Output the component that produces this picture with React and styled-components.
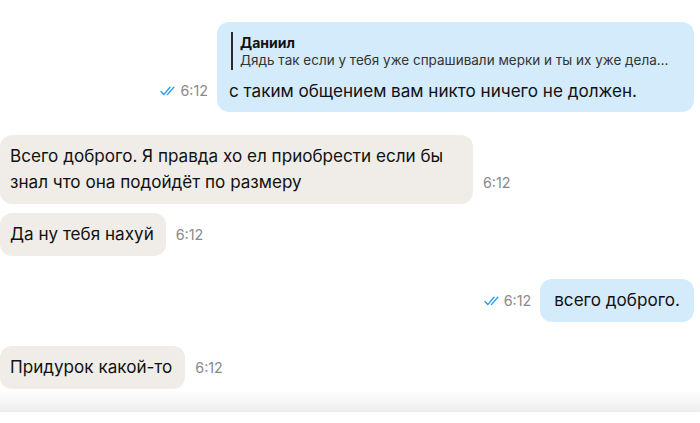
import React from "react";
import styled, { createGlobalStyle } from "styled-components";

const Global = createGlobalStyle`
  html, body { margin: 0; padding: 0; background: #ffffff; }
  body { font-family: Inter, "Noto Sans", sans-serif; color: #111111; overflow: hidden; }
`;

const Page = styled.div`
  width: 700px;
  height: 423px;
  display: flex;
  flex-direction: column;
  overflow: hidden;
`;

const Messages = styled.div`
  flex: 1;
  display: flex;
  flex-direction: column;
  padding: 22px 6px 0 0;
  overflow: hidden;
`;

const Row = styled.div`
  display: flex;
  align-items: flex-end;
  justify-content: ${(p) => (p.$out ? "flex-end" : "flex-start")};
  gap: ${(p) => (p.$out ? "9px" : "10px")};
  margin-top: ${(p) => p.$mt || 0}px;
`;

const Bubble = styled.div`
  background: ${(p) => (p.$out ? "#d4ebfc" : "#f0ede8")};
  border-radius: 12px;
  padding: ${(p) => p.$pad || "8px 12px 9px 10px"};
  max-width: ${(p) => p.$max || 477}px;
  width: ${(p) => (p.$w ? `${p.$w}px` : "auto")};
  min-width: 0;
  box-sizing: border-box;
  font-size: 17.1px;
  line-height: 26px;
`;

const Quote = styled.div`
  border-left: 2px solid #2b2b2b;
  padding: 2px 0 1px 7px;
  margin: 0 0 8px 2px;
  min-width: 0;
`;

const QuoteName = styled.div`
  font-size: 14px;
  font-weight: 700;
  line-height: 18px;
`;

const QuoteText = styled.div`
  font-size: 13.5px;
  line-height: 17px;
  color: #333333;
  white-space: nowrap;
  overflow: hidden;
  text-overflow: ellipsis;
`;

const Meta = styled.div`
  display: flex;
  align-items: center;
  gap: 4px;
  margin-bottom: 12px;
  flex-shrink: 0;
`;

const Time = styled.span`
  font-size: 14.3px;
  line-height: 18px;
  color: #8a8a8a;
`;

const Shade = styled.div`
  height: 22px;
  flex-shrink: 0;
  background: linear-gradient(to bottom, #ffffff, #ededed);
`;

const Footer = styled.div`
  height: 11px;
  flex-shrink: 0;
  background: #ffffff;
`;

const Checks = () => (
  <svg width="16" height="10" viewBox="0 0 16 10" fill="none">
    <path d="M1 5.6 L3.8 8.6 L10 1.2" stroke="#2a9bf0" strokeWidth="1.4" strokeLinecap="round" strokeLinejoin="round" />
    <path d="M7.4 8.6 L13.8 1.2" stroke="#2a9bf0" strokeWidth="1.4" strokeLinecap="round" strokeLinejoin="round" />
  </svg>
);

const OutMeta = () => (
  <Meta>
    <Checks />
    <Time>6:12</Time>
  </Meta>
);

const InMeta = () => (
  <Meta>
    <Time>6:12</Time>
  </Meta>
);

export default function App() {
  return (
    <Page>
      <Global />
      <Messages>
        <Row $out>
          <OutMeta />
          <Bubble $out $pad="10px 12px 8px 12px" $max={477} $w={477}>
            <Quote>
              <QuoteName>Даниил</QuoteName>
              <QuoteText>Дядь так если у тебя уже спрашивали мерки и ты их уже дела…</QuoteText>
            </Quote>
            с таким общением вам никто ничего не должен.
          </Bubble>
        </Row>
        <Row $mt={23}>
          <Bubble $max={473}>
            Всего доброго. Я правда хо ел приобрести если бы знал что она подойдёт по размеру
          </Bubble>
          <InMeta />
        </Row>
        <Row $mt={9}>
          <Bubble>Да ну тебя нахуй</Bubble>
          <InMeta />
        </Row>
        <Row $out $mt={23}>
          <OutMeta />
          <Bubble $out $pad="8px 14px 9px 14px">всего доброго.</Bubble>
        </Row>
        <Row $mt={24}>
          <Bubble $pad="8px 13px 9px 10px">Придурок какой-то</Bubble>
          <InMeta />
        </Row>
      </Messages>
      <Shade />
      <Footer />
    </Page>
  );
}
